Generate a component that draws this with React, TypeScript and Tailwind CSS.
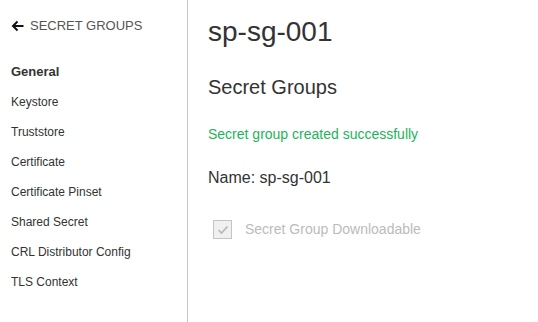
const items = [
  "Keystore",
  "Truststore",
  "Certificate",
  "Certificate Pinset",
  "Shared Secret",
  "CRL Distributor Config",
  "TLS Context",
]

export default function App() {
  return (
    <div className="flex h-[322px] w-[538px] bg-white font-['Liberation_Sans',Arial,sans-serif] text-[#333]">
      <aside className="w-[188px] shrink-0 border-r border-[#c8c8c8] pl-[11px]">
        <div className="mt-[16px] flex h-[20px] items-center gap-[6px]">
          <svg width="13" height="12" viewBox="0 0 13 12" className="text-[#111]">
            <path d="M12.5 6H2M6.5 1.5L2 6l4.5 4.5" fill="none" stroke="currentColor" strokeWidth="2" />
          </svg>
          <span className="text-[13px] text-[#555]">SECRET GROUPS</span>
        </div>
        <div className="mt-[26px] flex h-[20px] items-center text-[13px] font-bold">General</div>
        <ul className="mt-[5px]">
          {items.map((it) => (
            <li key={it} className="flex h-[30px] items-center text-[12px] text-[#333]">
              {it}
            </li>
          ))}
        </ul>
      </aside>
      <main className="flex-1 pl-[20px]">
        <h1 className="mt-[14px] h-[36px] text-[28px] leading-[36px] text-[#333]">sp-sg-001</h1>
        <h2 className="mt-[24px] h-[26px] text-[20px] leading-[26px] text-[#333]">Secret Groups</h2>
        <p className="mt-[25px] h-[18px] text-[14px] leading-[18px] text-[#1db35a]">Secret group created successfully</p>
        <p className="mt-[25px] h-[20px] text-[16px] leading-[20px] text-[#333]">Name: sp-sg-001</p>
        <div className="mt-[31px] ml-[5px] flex items-center gap-[13px]">
          <span className="flex h-[19px] w-[19px] items-center justify-center border border-[#c4c4c4] bg-[#f0f0f0]">
            <svg width="12" height="10" viewBox="0 0 12 10">
              <path d="M1.5 5l3 3 6-6.5" fill="none" stroke="#b5b5b5" strokeWidth="1.6" />
            </svg>
          </span>
          <span className="text-[14px] text-[#bbb]">Secret Group Downloadable</span>
        </div>
      </main>
    </div>
  )
}
